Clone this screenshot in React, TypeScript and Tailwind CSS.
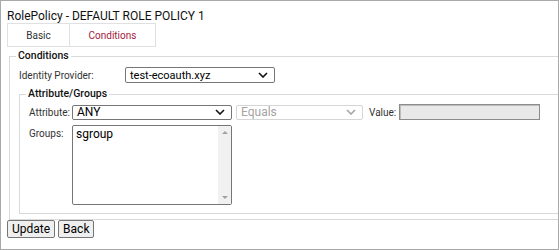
import React from "react";

function Chevron({ color = "#111" }: { color?: string }) {
  return (
    <svg width="10" height="6" viewBox="0 0 10 6" className="shrink-0">
      <path d="M1 1l4 4 4-4" fill="none" stroke={color} strokeWidth="1.6" />
    </svg>
  );
}

function FakeSelect({
  value,
  width,
  disabled,
}: {
  value: string;
  width: string;
  disabled?: boolean;
}) {
  return (
    <div
      className={
        disabled
          ? `${width} shrink-0 flex items-center justify-between pl-[4px] pr-[6px] border border-[#d6d6d6] rounded-[2px] bg-white text-[#a4a4a4]`
          : `${width} shrink-0 flex items-center justify-between pl-[4px] pr-[6px] border border-[#767676] rounded-[2px] bg-white text-black`
      }
    >
      <span className="leading-none">{value}</span>
      <Chevron color={disabled ? "#a4a4a4" : "#111"} />
    </div>
  );
}

export default function App() {
  return (
    <div
      className="w-[559px] h-[250px] border border-[#a9a9a9] bg-white text-[#222] overflow-hidden"
      style={{ fontFamily: "Roboto, 'Liberation Sans', sans-serif" }}
    >
      {/* 제목 */}
      <div className="pl-[6px] pt-[9px] text-[12px] leading-[12px] text-[#111]">
        RolePolicy - DEFAULT ROLE POLICY 1
      </div>

      {/* 탭 */}
      <div className="flex pl-[6px] mt-[1px]">
        <div className="w-[63px] h-[24px] flex items-center justify-center border border-[#e0e0e0] text-[10px] text-[#333]">
          Basic
        </div>
        <div className="w-[86px] h-[24px] flex items-center justify-center border border-l-0 border-[#e0e0e0] text-[10px] text-[#a3203c]">
          Conditions
        </div>
      </div>

      {/* Conditions 영역 */}
      <fieldset className="ml-[8px] mt-[2px] border border-r-0 border-[#d9d9d9] pb-[5px]">
        <legend className="ml-[6px] px-[2px] text-[10.5px] leading-[14px] font-medium text-[#111]">
          Conditions
        </legend>

        <div className="flex items-center pl-[9px] mt-[4px] h-[16px]">
          <span className="w-[106px] shrink-0 text-[10px] text-[#333]">Identity Provider:</span>
          <FakeSelect value="test-ecoauth.xyz" width="w-[150px] h-[16px] text-[11px]" />
        </div>

        <fieldset className="ml-[9px] mt-[4px] border border-r-0 border-[#d9d9d9] pb-[8px]">
          <legend className="ml-[6px] px-[2px] text-[10.5px] leading-[14px] font-medium text-[#111]">
            Attribute/Groups
          </legend>

          <div className="flex items-center pl-[9px] mt-[3px]">
            <span className="w-[43px] shrink-0 whitespace-nowrap text-[10px] text-[#333]">Attribute:</span>
            <FakeSelect value="ANY" width="w-[160px] h-[15px] text-[12px]" />
            <div className="ml-[4px]">
              <FakeSelect value="Equals" width="w-[127px] h-[15px] text-[12px]" disabled />
            </div>
            <span className="ml-[6px] w-[30px] shrink-0 whitespace-nowrap text-[10px] text-[#333]">Value:</span>
            <div className="w-[141px] h-[16px] border border-[#8c8c8c] bg-[#e9e9e9] shadow-[inset_1px_1px_0_#bdbdbd]" />
          </div>

          <div className="flex items-start pl-[9px] mt-[5px]">
            <span className="w-[43px] shrink-0 text-[10px] text-[#333] mt-[1px]">Groups:</span>
            <div className="w-[160px] h-[80px] flex border border-[#767676] rounded-[2px] bg-white">
              <div className="flex-1 pl-[3px] pt-[1px] text-[12px] text-black leading-[14px]">
                sgroup
              </div>
              <div className="w-[13px] bg-[#f1f1f1] flex flex-col items-center justify-between py-[5px]">
                <div className="w-0 h-0 border-l-[3px] border-r-[3px] border-b-[3px] border-l-transparent border-r-transparent border-b-[#a3a3a3]" />
                <div className="w-0 h-0 border-l-[3px] border-r-[3px] border-t-[3px] border-l-transparent border-r-transparent border-t-[#a3a3a3]" />
              </div>
            </div>
          </div>
        </fieldset>
      </fieldset>

      {/* 버튼 */}
      <div className="flex gap-[3px] pl-[6px]">
        <button className="h-[18px] px-[4px] border border-[#767676] rounded-[2px] bg-[#efefef] text-[12px] leading-none text-black">
          Update
        </button>
        <button className="h-[18px] px-[4px] border border-[#767676] rounded-[2px] bg-[#efefef] text-[12px] leading-none text-black">
          Back
        </button>
      </div>
    </div>
  );
}
